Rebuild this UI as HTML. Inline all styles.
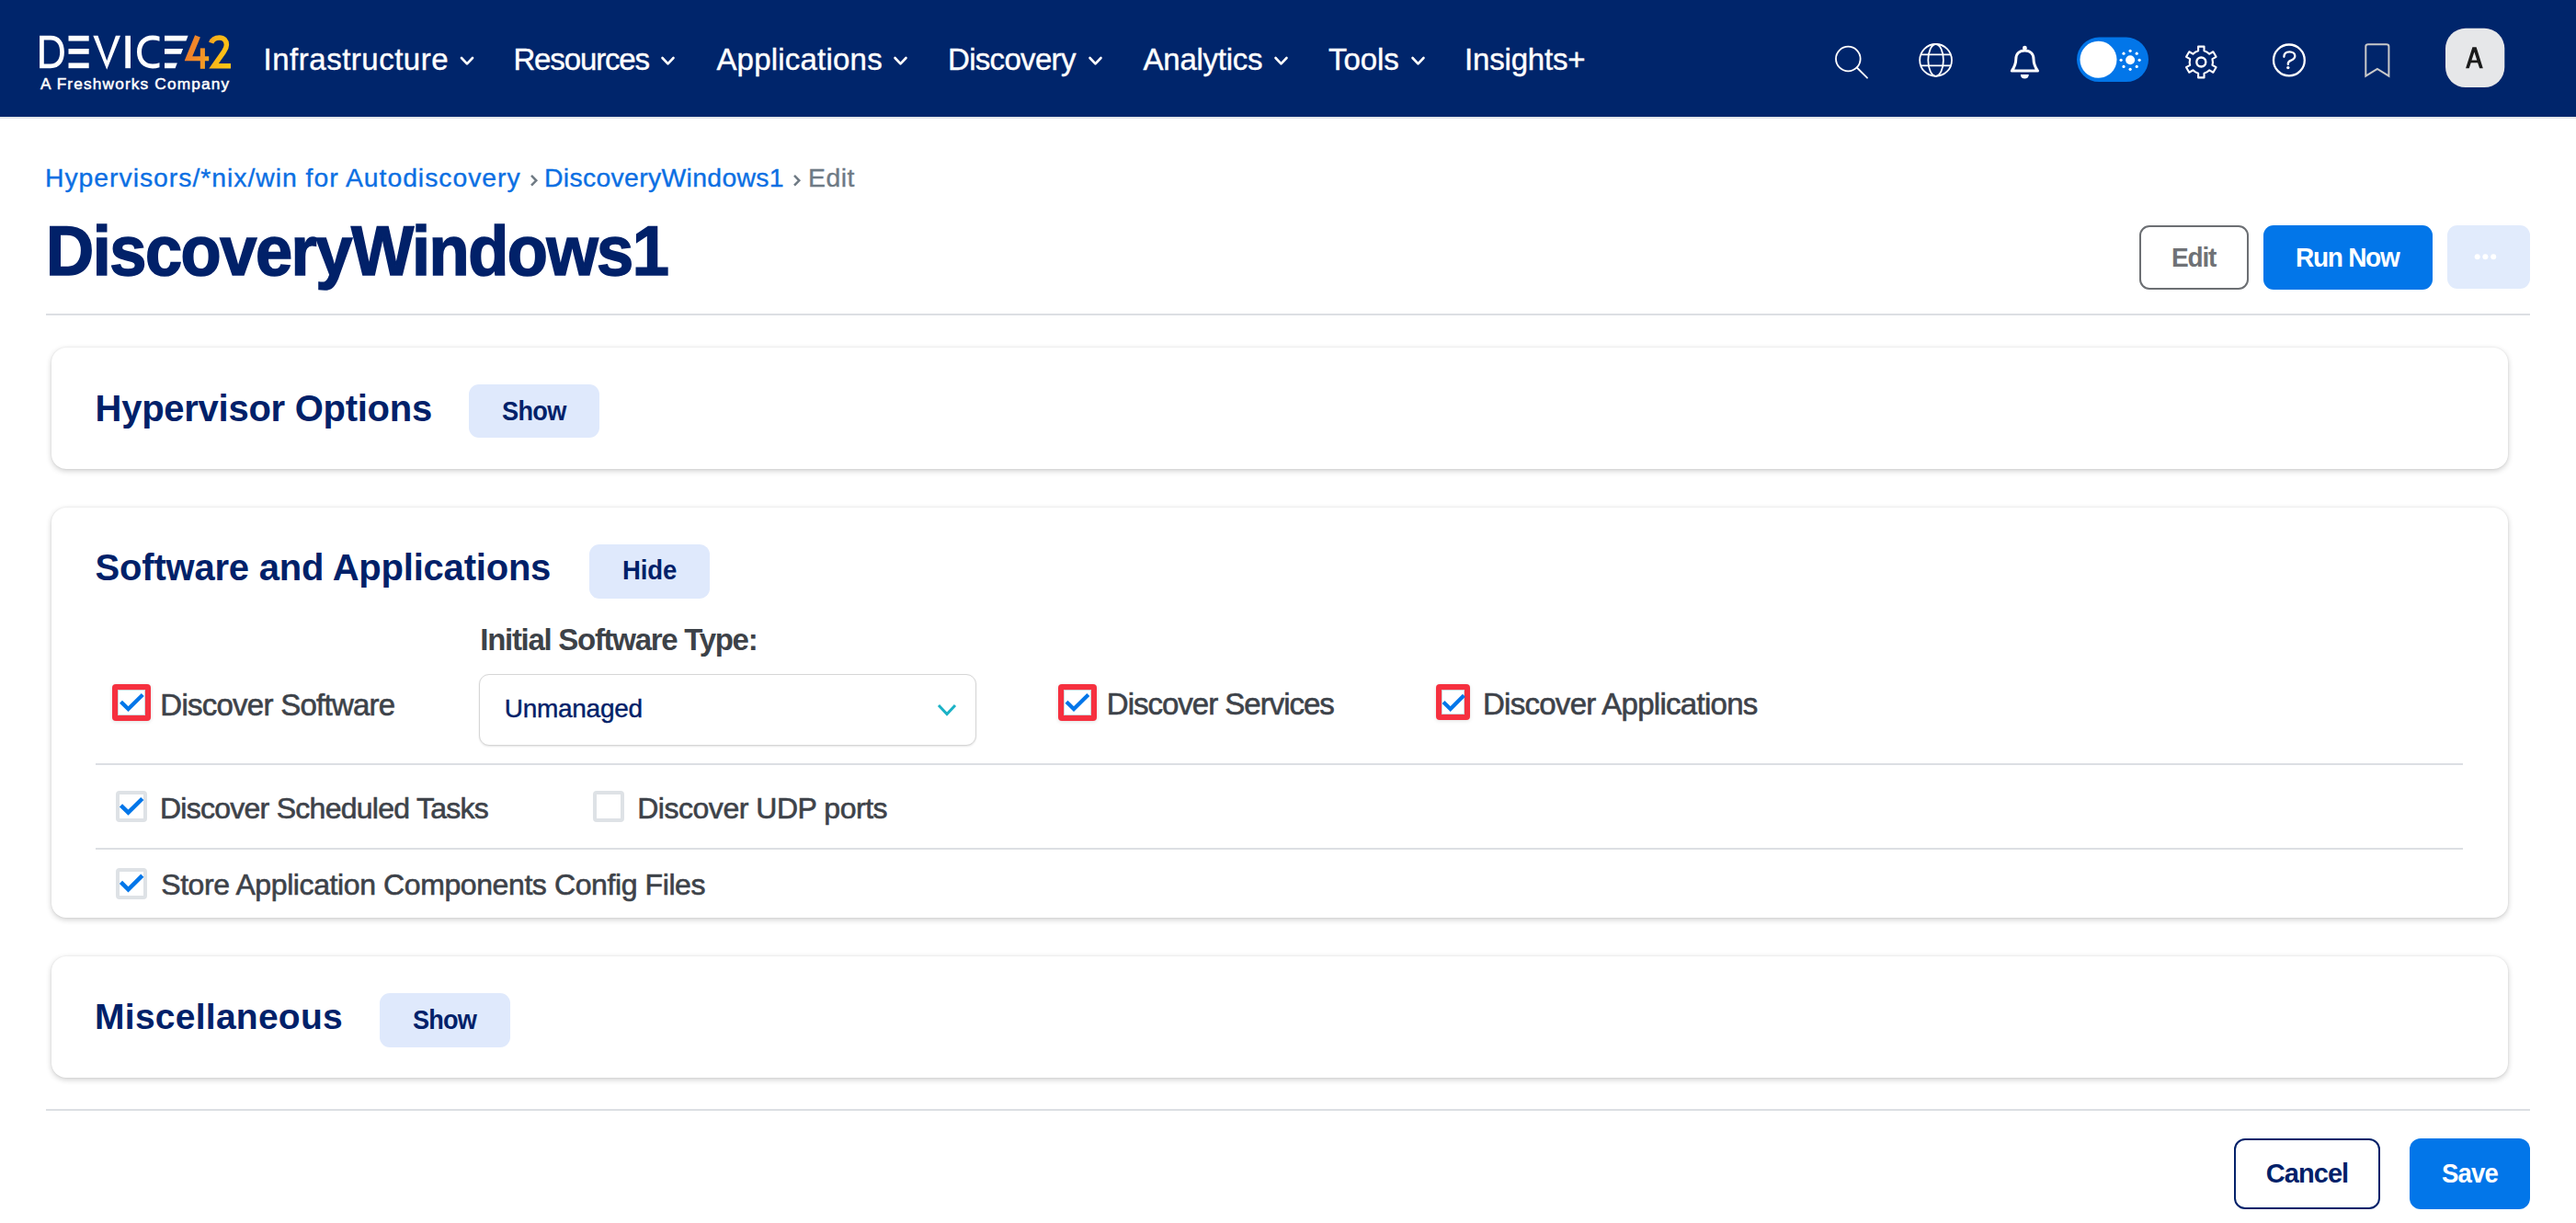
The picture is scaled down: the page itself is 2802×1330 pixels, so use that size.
<!DOCTYPE html>
<html><head><meta charset="utf-8">
<style>
html,body{margin:0;padding:0;}
body{width:2802px;height:1330px;overflow:hidden;position:relative;background:#fff;font-family:"Liberation Sans",sans-serif;}
.t{position:absolute;white-space:nowrap;line-height:1;}
.a{position:absolute;box-sizing:border-box;}
#hdr{left:0;top:0;width:2802px;height:127px;background:#00256b;}
#hdrline{left:0;top:127px;width:2802px;height:2px;background:#e3e5e9;}
.div{position:absolute;height:2px;background:#dcdfe3;}
.card{position:absolute;background:#fff;border-radius:16px;box-shadow:0 2px 6px rgba(0,0,0,0.2),0 0 2px rgba(0,0,0,0.08);}
.lbtn{position:absolute;background:#dfe9fc;border-radius:11px;}
.cbx{position:absolute;box-sizing:border-box;width:34px;height:34px;border:4px solid #dee2e6;border-radius:4px;background:#fff;}
.red{position:absolute;box-sizing:border-box;width:42px;height:40px;background:#f6303f;border-radius:4px;box-shadow:0 1px 4px rgba(0,0,0,0.12);}
.red i{position:absolute;left:6px;top:6px;width:30px;height:28px;box-sizing:border-box;background:#fff;border:1px solid #cfd6da;}
</style></head><body>
<div id="hdr" class="a"></div>
<div id="hdrline" class="a"></div>

<!-- logo -->
<svg class="a" style="left:40px;top:34px" width="216" height="46" viewBox="40 34 216 46">
 <defs><linearGradient id="g42" gradientUnits="userSpaceOnUse" x1="201" y1="50" x2="251" y2="60"><stop offset="0" stop-color="#ee7a2c"/><stop offset="0.42" stop-color="#f39426"/><stop offset="0.62" stop-color="#f9b41b"/><stop offset="1" stop-color="#fdc614"/></linearGradient></defs>
 <path d="M43.1 38.8 H55 C65 38.8 69.9 46 69.9 56.5 C69.9 67 65 74.2 55 74.2 H43.1 Z M47.8 43.5 V69.5 H55 C62 69.5 65.2 64 65.2 56.5 C65.2 49 62 43.5 55 43.5 Z" fill="#fff" fill-rule="evenodd"/>
 <rect x="74.5" y="38.8" width="22.2" height="5.8" fill="#fff"/>
 <rect x="74.5" y="53" width="22.2" height="5.8" fill="#fff"/>
 <rect x="74.5" y="68.4" width="22.2" height="5.8" fill="#fff"/>
 <path d="M101.3 38.8 H106.5 L116.2 66 L125.9 38.8 H131 L116.2 75.7 Z" fill="#fff"/>
 <rect x="136.3" y="38.8" width="5.7" height="35.4" fill="#fff"/>
 <path d="M173.5 39.8 C171 39 168.5 38.6 166 38.6 C155.5 38.6 149 46 149 56.5 C149 67 155.5 74.4 166 74.4 C168.5 74.4 171 74 173.5 73.2 V68.2 C171 69.1 168.5 69.6 166 69.6 C158.6 69.6 154 64.5 154 56.5 C154 48.5 158.6 43.4 166 43.4 C168.5 43.4 171 43.9 173.5 44.8 Z" fill="#fff"/>
 <path d="M179 38.8 H204.6 L202.4 44.6 H179 Z" fill="#fff"/>
 <path d="M179 53 H199.1 L196.9 58.8 H179 Z" fill="#fff"/>
 <path d="M179 68.4 H192.8 L190.6 74.2 H179 Z" fill="#fff"/>
 <path d="M212.1 38.3 L217.9 40.4 L209.3 61.2 H227.2 V66.2 H200.9 V65.4 Z" fill="url(#g42)"/>
 <rect x="217.8" y="52.4" width="5.1" height="22.4" fill="url(#g42)"/>
 <path d="M229.7 46.6 C231 42.8 234.5 40.9 238.6 40.9 C243.6 40.9 246.4 44.3 246.4 48.8 C246.4 51.6 245.4 53.6 243.4 56.3 L232.6 71.65 H251" fill="none" stroke="url(#g42)" stroke-width="5.5"/>
</svg>

<!-- nav chevrons -->
<svg class="a" style="left:0;top:0" width="1600" height="127">
 <g fill="none" stroke="#fff" stroke-width="2.6" stroke-linecap="round" stroke-linejoin="round">
  <polyline points="502,63 508,69.3 514,63"/>
  <polyline points="720.5,63 726.5,69.3 732.5,63"/>
  <polyline points="973.5,63 979.5,69.3 985.5,63"/>
  <polyline points="1185.5,63 1191.5,69.3 1197.5,63"/>
  <polyline points="1387.5,63 1393.5,69.3 1399.5,63"/>
  <polyline points="1536.5,63 1542.5,69.3 1548.5,63"/>
 </g>
</svg>

<!-- right icons -->
<svg class="a" style="left:1960px;top:0" width="842" height="127" viewBox="1960 0 842 127">
 <g fill="none" stroke="#fff" stroke-width="1.8">
  <circle cx="2010.3" cy="64" r="13.3"/>
  <line x1="2019.8" y1="73.5" x2="2031" y2="84.7" stroke-linecap="round"/>
  <circle cx="2105.6" cy="65.4" r="17.4"/>
  <ellipse cx="2105.6" cy="65.4" rx="8.3" ry="17.4"/>
  <line x1="2089" y1="59.3" x2="2122.2" y2="59.3"/>
  <line x1="2089" y1="71.4" x2="2122.2" y2="71.4"/>
 </g>
 <path d="M2202.4 54.9 C2196.4 54.9 2192.8 58.8 2192.8 64.2 C2192.8 69.6 2191.8 72 2188.3 77.1 H2216.5 C2213 72 2212 69.6 2212 64.2 C2212 58.8 2208.4 54.9 2202.4 54.9 Z" fill="none" stroke="#fff" stroke-width="3" stroke-linejoin="round"/>
 <circle cx="2202.4" cy="52.2" r="2.4" fill="#fff"/>
 <path d="M2197.8 81 H2206.8 C2206.8 84 2204.8 85.6 2202.3 85.6 C2199.8 85.6 2197.8 84 2197.8 81 Z" fill="#fff"/>
 <!-- toggle -->
 <rect x="2259" y="40.6" width="78" height="48.4" rx="24.2" fill="#0276e9"/>
 <circle cx="2282.5" cy="64.8" r="20" fill="#fff"/>
 <circle cx="2317.1" cy="65.3" r="5" fill="#fff"/>
 <g fill="#fff">
  <circle cx="2317.1" cy="55.3" r="1.6"/><circle cx="2317.1" cy="75.3" r="1.6"/>
  <circle cx="2307.1" cy="65.3" r="1.6"/><circle cx="2327.1" cy="65.3" r="1.6"/>
  <circle cx="2310" cy="58.2" r="1.6"/><circle cx="2324.2" cy="58.2" r="1.6"/>
  <circle cx="2310" cy="72.4" r="1.6"/><circle cx="2324.2" cy="72.4" r="1.6"/>
 </g>
 <!-- gear -->
 <path id="gear" d="M2391.10 55.31 L2391.10 50.60 L2397.50 50.60 L2397.50 55.31 A12.60 12.60 0 0 1 2403.25 58.64 L2407.34 56.28 L2410.54 61.82 L2406.45 64.18 A12.60 12.60 0 0 1 2406.45 70.82 L2410.54 73.18 L2407.34 78.72 L2403.25 76.36 A12.60 12.60 0 0 1 2397.50 79.69 L2397.50 84.40 L2391.10 84.40 L2391.10 79.69 A12.60 12.60 0 0 1 2385.35 76.36 L2381.26 78.72 L2378.06 73.18 L2382.15 70.82 A12.60 12.60 0 0 1 2382.15 64.18 L2378.06 61.82 L2381.26 56.28 L2385.35 58.64 A12.60 12.60 0 0 1 2391.10 55.31 Z" fill="none" stroke="#fff" stroke-width="2.1" stroke-linejoin="round"/>
 <circle cx="2394.3" cy="67.5" r="5" fill="none" stroke="#fff" stroke-width="2.4"/>
 <!-- help -->
 <circle cx="2489.9" cy="65.4" r="16.9" fill="none" stroke="#fff" stroke-width="2.3"/>
 <path d="M2484.4 61.8 C2484.4 58.3 2486.8 56.4 2490.4 56.4 C2494 56.4 2496.3 58.4 2496.3 61 C2496.3 63.6 2494.2 64.8 2491.6 65.9 C2489.6 66.8 2488.8 67.8 2488.8 69.3 V70" fill="none" stroke="#fff" stroke-width="2.3" stroke-linecap="round"/>
 <circle cx="2488.8" cy="73.6" r="1.7" fill="#fff"/>
 <!-- bookmark -->
 <path d="M2573.3 82.6 V50.5 C2573.3 49 2574.5 48.3 2576 48.3 H2595.6 C2597.1 48.3 2598.4 49 2598.4 50.5 V82.6 L2585.9 74.9 Z" fill="none" stroke="#c9c9c9" stroke-width="2"/>
 <!-- avatar -->
 <rect x="2660" y="30.8" width="64.3" height="64.3" rx="22" fill="#e6e7e9"/>
 <path d="M2689.4 51.3 H2693.6 L2700.8 74.3 H2697.1 L2695.1 68.2 H2687.7 L2685.7 74.3 H2682.1 Z M2691.4 56.6 L2688.5 65.6 H2694.3 Z" fill="#1b1b1b" fill-rule="evenodd"/>
</svg>

<!-- title buttons -->
<div class="a" style="left:2327.3px;top:245.2px;width:118.5px;height:69.6px;border:2px solid #6c6f73;border-radius:11px;"></div>
<div class="a" style="left:2461.8px;top:245.2px;width:184.2px;height:69.6px;background:#0276e9;border-radius:11px;"></div>
<div class="a" style="left:2662px;top:245.2px;width:89.8px;height:68.6px;background:#e1ebfc;border-radius:11px;"></div>
<svg class="a" style="left:2680px;top:270px" width="50" height="20"><g fill="#fff"><circle cx="14.7" cy="9.3" r="3"/><circle cx="23.4" cy="9.3" r="3"/><circle cx="32.2" cy="9.3" r="3"/></g></svg>

<svg class="a" style="left:560px;top:185px" width="330" height="25"><g fill="none" stroke="#6f7a84" stroke-width="2.5" stroke-linejoin="miter"><polyline points="578,5.9 583.3,11.3 578,16.7" transform="translate(-560,0)"/><polyline points="864,5.9 869.3,11.3 864,16.7" transform="translate(-560,0)"/></g></svg>
<div class="div" style="left:50px;top:341px;width:2702px;"></div>

<!-- cards -->
<div class="card" style="left:56px;top:378px;width:2672px;height:132px;"></div>
<div class="lbtn" style="left:510px;top:417.8px;width:142px;height:58.7px;"></div>

<div class="card" style="left:56px;top:552px;width:2672px;height:446px;"></div>
<div class="lbtn" style="left:641px;top:592px;width:131px;height:59px;"></div>

<div class="card" style="left:56px;top:1040px;width:2672px;height:131.5px;"></div>
<div class="lbtn" style="left:413.1px;top:1080.2px;width:141.7px;height:58.6px;"></div>

<!-- dropdown -->
<div class="a" style="left:521.4px;top:732.8px;width:541px;height:77.8px;border:1.6px solid #d6d6d6;border-radius:11px;background:#fff;box-shadow:0 1px 2px rgba(0,0,0,0.1);"></div>
<svg class="a" style="left:1010px;top:755px" width="40" height="30"><polyline points="11,12 20,21.5 29,12" fill="none" stroke="#1bb2c6" stroke-width="3"/></svg>

<!-- red checkboxes -->
<div class="red" style="left:122px;top:743.7px;"><i></i></div>
<div class="red" style="left:1150.5px;top:743.9px;"><i></i></div>
<div class="red" style="left:1562.2px;top:744.1px;width:37.1px;height:38.5px;"><i style="width:25.3px;height:26.7px;left:5.9px;top:5.9px;"></i></div>
<svg class="a" style="left:0;top:700px" width="1700" height="100">
 <g fill="none" stroke="#0276e9" stroke-width="4.2">
  <polyline points="131.5,63.2 139.5,71 155.3,55.5"/>
  <polyline points="1160,63.2 1168,71 1183.8,55.5"/>
  <polyline points="1570,63.5 1577.7,71 1592.4,56.2"/>
 </g>
</svg>

<!-- dividers inside card2 -->
<div class="div" style="left:104px;top:830px;width:2575px;"></div>
<div class="div" style="left:104px;top:922px;width:2575px;"></div>

<!-- small checkboxes -->
<div class="cbx" style="left:126px;top:860px;"></div>
<div class="cbx" style="left:645px;top:860px;"></div>
<div class="cbx" style="left:126px;top:943.5px;"></div>
<svg class="a" style="left:0;top:850px" width="200" height="140">
 <g fill="none" stroke="#0276e9" stroke-width="4.5">
  <polyline points="131.5,25.8 139.5,33.7 154.8,18.5"/>
  <polyline points="131.5,109.4 139.5,117.3 154.8,102.1"/>
 </g>
</svg>

<div class="div" style="left:50px;top:1206px;width:2702px;"></div>

<!-- footer buttons -->
<div class="a" style="left:2430px;top:1238px;width:159px;height:76.5px;border:2.5px solid #012169;border-radius:12px;"></div>
<div class="a" style="left:2620.8px;top:1238px;width:131.1px;height:76.5px;background:#0276e9;border-radius:12px;"></div>

<div class="t" style="left:286.6px;top:48.1px;font-size:33px;font-weight:400;letter-spacing:0.50px;color:#fff;-webkit-text-stroke:0.4px #fff;">Infrastructure</div>
<div class="t" style="left:558.4px;top:48.1px;font-size:33px;font-weight:400;letter-spacing:-1.13px;color:#fff;-webkit-text-stroke:0.4px #fff;">Resources</div>
<div class="t" style="left:779.4px;top:48.1px;font-size:33px;font-weight:400;letter-spacing:0.21px;color:#fff;-webkit-text-stroke:0.4px #fff;">Applications</div>
<div class="t" style="left:1031.0px;top:48.1px;font-size:33px;font-weight:400;letter-spacing:-0.68px;color:#fff;-webkit-text-stroke:0.4px #fff;">Discovery</div>
<div class="t" style="left:1243.6px;top:48.1px;font-size:33px;font-weight:400;letter-spacing:-0.26px;color:#fff;-webkit-text-stroke:0.4px #fff;">Analytics</div>
<div class="t" style="left:1445.1px;top:48.1px;font-size:33px;font-weight:400;letter-spacing:-0.10px;color:#fff;-webkit-text-stroke:0.4px #fff;">Tools</div>
<div class="t" style="left:1593.1px;top:48.1px;font-size:33px;font-weight:400;letter-spacing:-0.20px;color:#fff;-webkit-text-stroke:0.4px #fff;">Insights+</div>
<div class="t" style="left:48.7px;top:180.7px;font-size:27px;font-weight:400;letter-spacing:0.93px;color:#0b6fe3;transform:scaleX(1.05);transform-origin:0 0;-webkit-text-stroke:0.35px #0b6fe3;">Hypervisors/*nix/win for Autodiscovery</div>
<div class="t" style="left:592.0px;top:180.7px;font-size:27px;font-weight:400;letter-spacing:0.32px;color:#0b6fe3;transform:scaleX(1.05);transform-origin:0 0;-webkit-text-stroke:0.35px #0b6fe3;">DiscoveryWindows1</div>
<div class="t" style="left:878.5px;top:180.7px;font-size:27px;font-weight:400;letter-spacing:0.49px;color:#6e7a85;transform:scaleX(1.05);transform-origin:0 0;-webkit-text-stroke:0.35px #6e7a85;">Edit</div>
<div class="t" style="left:50.0px;top:234.9px;font-size:76px;font-weight:700;letter-spacing:-1.55px;color:#012169;transform:scaleX(0.95);transform-origin:0 0;-webkit-text-stroke:1.6px #012169;">DiscoveryWindows1</div>
<div class="t" style="left:2361.6px;top:265.0px;font-size:29.5px;font-weight:700;letter-spacing:-1.22px;color:#6f7276;transform:scaleX(0.95);transform-origin:0 0;">Edit</div>
<div class="t" style="left:2497.1px;top:265.0px;font-size:29.5px;font-weight:700;letter-spacing:-1.35px;color:#fff;transform:scaleX(0.95);transform-origin:0 0;">Run Now</div>
<div class="t" style="left:103.6px;top:423.6px;font-size:40px;font-weight:700;letter-spacing:-0.27px;color:#012169;">Hypervisor Options</div>
<div class="t" style="left:546.0px;top:432.2px;font-size:29.5px;font-weight:700;letter-spacing:-0.72px;color:#012169;transform:scaleX(0.92);transform-origin:0 0;">Show</div>
<div class="t" style="left:103.6px;top:596.9px;font-size:40px;font-weight:700;letter-spacing:-0.21px;color:#012169;">Software and Applications</div>
<div class="t" style="left:677.3px;top:606.1px;font-size:29px;font-weight:700;letter-spacing:-0.11px;color:#012169;transform:scaleX(0.95);transform-origin:0 0;">Hide</div>
<div class="t" style="left:522.3px;top:679.2px;font-size:33px;font-weight:700;letter-spacing:-1.29px;color:#3d4248;">Initial Software Type:</div>
<div class="t" style="left:174.3px;top:749.8px;font-size:33px;font-weight:400;letter-spacing:-0.74px;color:#3d4249;-webkit-text-stroke:0.6px #3d4249;">Discover Software</div>
<div class="t" style="left:548.8px;top:756.6px;font-size:28px;font-weight:400;letter-spacing:-0.29px;color:#012169;-webkit-text-stroke:0.4px #012169;">Unmanaged</div>
<div class="t" style="left:1203.8px;top:749.4px;font-size:33px;font-weight:400;letter-spacing:-1.00px;color:#3d4249;-webkit-text-stroke:0.6px #3d4249;">Discover Services</div>
<div class="t" style="left:1612.9px;top:749.4px;font-size:33px;font-weight:400;letter-spacing:-0.71px;color:#3d4249;-webkit-text-stroke:0.6px #3d4249;">Discover Applications</div>
<div class="t" style="left:173.9px;top:862.8px;font-size:32px;font-weight:400;letter-spacing:-0.73px;color:#3d4249;-webkit-text-stroke:0.6px #3d4249;">Discover Scheduled Tasks</div>
<div class="t" style="left:693.2px;top:862.8px;font-size:32px;font-weight:400;letter-spacing:-0.47px;color:#3d4249;-webkit-text-stroke:0.6px #3d4249;">Discover UDP ports</div>
<div class="t" style="left:175.2px;top:945.8px;font-size:32px;font-weight:400;letter-spacing:-0.40px;color:#3d4249;-webkit-text-stroke:0.6px #3d4249;">Store Application Components Config Files</div>
<div class="t" style="left:103.1px;top:1085.7px;font-size:39px;font-weight:700;letter-spacing:0.25px;color:#012169;">Miscellaneous</div>
<div class="t" style="left:449.3px;top:1094.2px;font-size:29.5px;font-weight:700;letter-spacing:-0.90px;color:#012169;transform:scaleX(0.92);transform-origin:0 0;">Show</div>
<div class="t" style="left:2464.8px;top:1262.2px;font-size:29px;font-weight:700;letter-spacing:-0.95px;color:#012169;">Cancel</div>
<div class="t" style="left:2655.9px;top:1262.2px;font-size:29px;font-weight:700;letter-spacing:-0.90px;color:#fff;transform:scaleX(0.95);transform-origin:0 0;">Save</div>
<div class="t" style="left:43.7px;top:84.3px;font-size:16px;font-weight:400;letter-spacing:1.06px;color:#fff;transform:scaleX(1.08);transform-origin:0 0;-webkit-text-stroke:0.45px #fff;">A Freshworks Company</div>
</body></html>
